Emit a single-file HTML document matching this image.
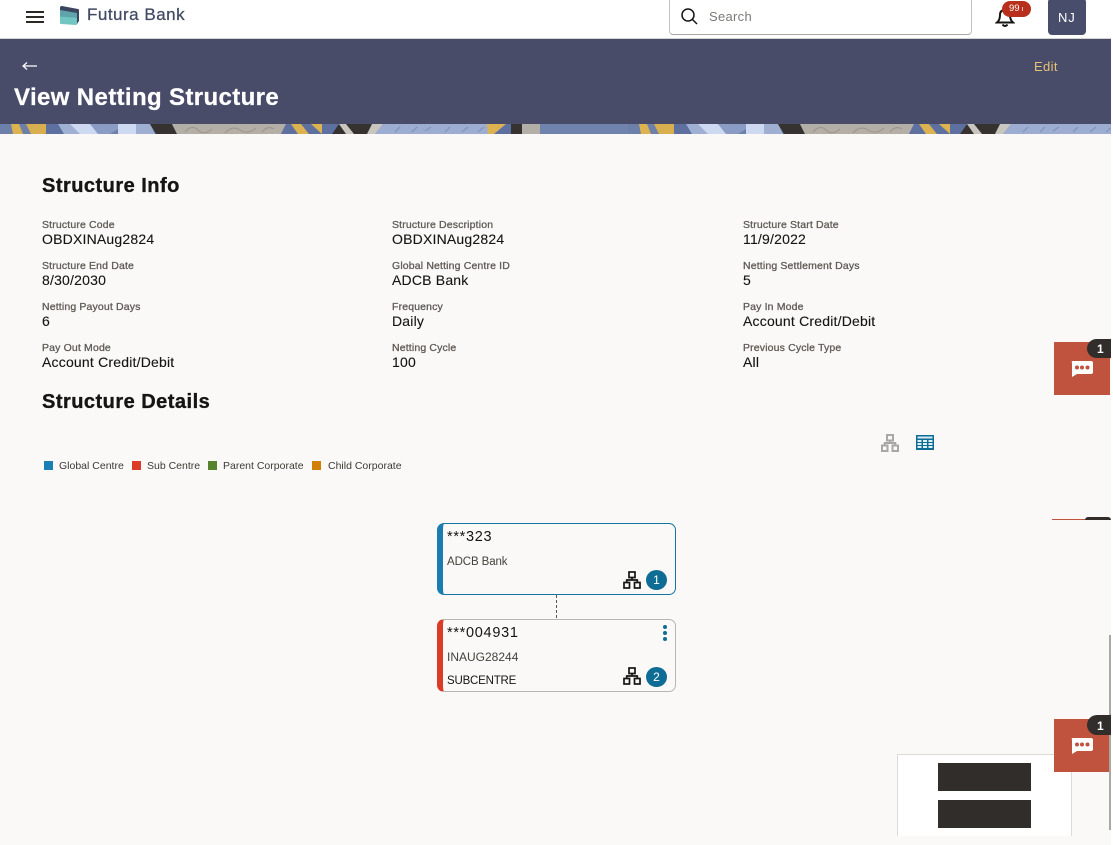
<!DOCTYPE html>
<html><head><meta charset="utf-8"><title>View Netting Structure</title>
<style>
html,body{margin:0;padding:0;}
body{width:1113px;height:845px;background:#faf9f7;position:relative;overflow:hidden;font-family:"Liberation Sans",sans-serif;color:#161513;}
div,span,svg{position:absolute;}
.t{white-space:nowrap;}
.l{font-size:10.5px;color:#5f5b56;font-weight:400;letter-spacing:.15px;-webkit-text-stroke:.3px #5f5b56;line-height:12px;}
.v{font-size:14px;color:#161513;letter-spacing:.2px;-webkit-text-stroke:.12px #161513;line-height:16px;}
.h{font-size:20px;font-weight:700;letter-spacing:.48px;-webkit-text-stroke:.35px #161513;line-height:24px;color:#161513;}
.lg{font-size:10.5px;color:#3d3a36;line-height:12px;letter-spacing:0;}
.sq{width:9px;height:9px;top:461px;}
</style></head><body>

<div style="left:0;top:0;width:1113px;height:39px;background:#fff;"></div>
<div style="left:0;top:38px;width:1113px;height:1px;background:#d5d3d0;"></div>
<div style="left:26px;top:11px;width:18px;height:2px;background:#2b2825;"></div>
<div style="left:26px;top:16px;width:18px;height:2px;background:#2b2825;"></div>
<div style="left:26px;top:21px;width:18px;height:2px;background:#2b2825;"></div>
<svg style="left:59px;top:5px;" width="21" height="21" viewBox="0 0 21 21">
<path d="M1 2.500 Q1 1 3 1 L19 4 Q20 4 20 5 V16 L18 19 L16 17 V8 L1 6Z" fill="#3c4560"/>
<path d="M1 5 L18 8 V13 L1 12Z" fill="#5fa3ab"/>
<path d="M1 11.500 L18 13 V19 Q18 20 17 20 L2 19 Q1 19 1 18Z" fill="#72c6c2"/></svg>
<div class="t" style="left:87px;top:5px;font-size:17px;line-height:20px;color:#414a63;letter-spacing:.5px;-webkit-text-stroke:.25px #414a63;">Futura Bank</div>

<div style="left:669px;top:-3px;width:301px;height:36px;background:#fff;border:1px solid #c4c2bf;border-bottom-color:#a9a7a4;border-radius:4px;"></div>
<svg style="left:680px;top:7px;" width="18" height="18" viewBox="0 0 18 18" fill="none" stroke="#161513" stroke-width="1.5"><circle cx="8" cy="8" r="6"/><path d="M12.500 12.500L17 17"/></svg>
<div class="t" style="left:709px;top:9px;font-size:13px;line-height:16px;color:#7d7a76;letter-spacing:.3px;">Search</div>

<svg style="left:995px;top:7px;" width="20" height="20" viewBox="0 0 20 20" fill="none" stroke="#161513" stroke-width="2"><path d="M2 15.500 Q5 13 5 8 Q5 3 10 3 Q15 3 15 8 Q15 13 18 15.500Z"/><path d="M7.500 17.500 Q10 20.500 12.500 17.500"/></svg>
<div style="left:1002px;top:1px;width:29px;height:16px;background:#b8301c;border-radius:8px;"></div>
<div class="t" style="left:1009px;top:3px;font-size:9.500px;line-height:11px;color:#fff;">99</div>
<div style="left:1021.500px;top:7px;width:1px;height:4px;background:#e8b8b0;"></div>
<div style="left:1048px;top:-2px;width:38px;height:37px;background:#484d6b;border-radius:4px;"></div>
<div class="t" style="left:1058px;top:10px;font-size:13px;line-height:16px;color:#fff;letter-spacing:.8px;">NJ</div>

<div style="left:0;top:39px;width:1113px;height:85px;background:#484c68;"></div>
<svg style="left:22px;top:61px;" width="15" height="10" viewBox="0 0 15 10" fill="none" stroke="#fff" stroke-width="1.200"><path d="M15 5H1M5 1.500L1 5L5 8.500"/></svg>
<div class="t" style="left:14px;top:84px;font-size:24px;line-height:27px;font-weight:700;color:#fff;letter-spacing:.37px;-webkit-text-stroke:.25px #fff;">View Netting Structure</div>
<div class="t" style="left:1034px;top:59px;font-size:13px;line-height:16px;color:#e5c07b;letter-spacing:.35px;">Edit</div>

<svg style="left:0;top:124px;" width="1113" height="10" viewBox="0 0 1113 10">
<defs><g id="band">
<rect width="628" height="10" fill="#6c80aa"/>
<polygon points="11,0 19,0 23,10 13,10" fill="#dcb350"/>
<polygon points="26,0 46,0 46,10 31,10" fill="#d8ae4f"/>
<polygon points="46,0 60,0 64,10 46,10" fill="#5d70a0"/>
<polygon points="58,0 118,0 118,4 110,10 64,10" fill="#9fb0d3"/>
<polygon points="70,0 90,0 98,10 80,10" fill="#cdd9f0"/>
<polygon points="90,0 118,0 118,5 110,10 98,10" fill="#8a9cc4"/>
<polygon points="118,0 136,0 136,10 118,10" fill="#cdd9f0"/>
<polygon points="136,0 150,0 155,10 136,10" fill="#9eafd2"/>
<polygon points="150,0 172,0 177,10 156,10" fill="#35322f"/>
<polygon points="172,0 286,0 281,10 177,10" fill="#b3aea6"/>
<path d="M185 8Q192 0 198 6T212 5M225 9Q232 1 240 6T256 4M262 8Q268 1 274 5" fill="none" stroke="#9a958d" stroke-width="1"/>
<polygon points="286,0 292,0 298,10 281,10" fill="#5d70a0"/>
<polygon points="291,0 301,0 309,10 298,10" fill="#dcb350"/>
<polygon points="301,0 311,0 322,10 309,10" fill="#5d70a0"/>
<polygon points="311,0 322,0 322,10" fill="#dcb350"/>
<polygon points="322,0 339,0 332,10 322,10" fill="#5d70a0"/>
<polygon points="339,0 378,0 370,10 332,10" fill="#35322f"/>
<polygon points="339,0 346,0 354,10 346,10" fill="#c9c6c0"/>
<polygon points="372,0 383,0 375,10 367,10" fill="#c9c6c0"/>
<polygon points="383,0 510,0 505,10 375,10" fill="#9dadd1"/>
<path d="M395 8L400 3M412 8L417 3M425 7L431 3M445 8L450 3M462 8L468 3M478 8L484 3" stroke="#7d8fb8" stroke-width="1"/>
<polygon points="487,0 506,0 494,10 488,10" fill="#dcb350"/>
<polygon points="506,0 511,0 511,10 494,10" fill="#5d70a0"/>
<rect x="511" y="0" width="11" height="10" fill="#35322f"/>
<rect x="522" y="0" width="18" height="10" fill="#b3aea6"/>
<polygon points="540,0 628,0 628,10 540,10" fill="#6f83ad"/>
</g></defs>
<use href="#band" x="0"/><use href="#band" x="628"/>
</svg>

<div class="h t" style="left:42px;top:174px;">Structure Info</div>
<div class="h t" style="left:42px;top:390px;">Structure Details</div>

<div class="l t" style="left:42px;top:219px;">Structure Code</div><div class="v t" style="left:42px;top:231px;">OBDXINAug2824</div>
<div class="l t" style="left:392px;top:219px;">Structure Description</div><div class="v t" style="left:392px;top:231px;">OBDXINAug2824</div>
<div class="l t" style="left:743px;top:219px;">Structure Start Date</div><div class="v t" style="left:743px;top:231px;">11/9/2022</div>
<div class="l t" style="left:42px;top:260px;">Structure End Date</div><div class="v t" style="left:42px;top:272px;">8/30/2030</div>
<div class="l t" style="left:392px;top:260px;">Global Netting Centre ID</div><div class="v t" style="left:392px;top:272px;">ADCB Bank</div>
<div class="l t" style="left:743px;top:260px;">Netting Settlement Days</div><div class="v t" style="left:743px;top:272px;">5</div>
<div class="l t" style="left:42px;top:301px;">Netting Payout Days</div><div class="v t" style="left:42px;top:313px;">6</div>
<div class="l t" style="left:392px;top:301px;">Frequency</div><div class="v t" style="left:392px;top:313px;">Daily</div>
<div class="l t" style="left:743px;top:301px;">Pay In Mode</div><div class="v t" style="left:743px;top:313px;">Account Credit/Debit</div>
<div class="l t" style="left:42px;top:342px;">Pay Out Mode</div><div class="v t" style="left:42px;top:354px;">Account Credit/Debit</div>
<div class="l t" style="left:392px;top:342px;">Netting Cycle</div><div class="v t" style="left:392px;top:354px;">100</div>
<div class="l t" style="left:743px;top:342px;">Previous Cycle Type</div><div class="v t" style="left:743px;top:354px;">All</div>

<svg style="left:881px;top:434px;" width="18" height="18" viewBox="0 0 18 18" fill="none" stroke="#a9a7a4" stroke-width="2"><rect x="6" y="1" width="6" height="5.500"/><rect x="1" y="11.500" width="5.500" height="5.500"/><rect x="11.500" y="11.500" width="5.500" height="5.500"/><path d="M9 6.500V9M3.700 11.500V9H14.300V11.500"/></svg>
<svg style="left:916px;top:435px;" width="18" height="15" viewBox="0 0 18 15"><rect width="18" height="15" fill="#0f6c94"/><rect x="1.500" y="1.500" width="15" height="2" fill="#d4ecf4"/><g fill="#e2f1f6"><rect x="1.500" y="5" width="4" height="2"/><rect x="7" y="5" width="4" height="2"/><rect x="12.500" y="5" width="4" height="2"/><rect x="1.500" y="8" width="4" height="2"/><rect x="7" y="8" width="4" height="2"/><rect x="12.500" y="8" width="4" height="2"/><rect x="1.500" y="11" width="4" height="2"/><rect x="7" y="11" width="4" height="2"/><rect x="12.500" y="11" width="4" height="2"/></g></svg>

<div class="sq" style="left:44px;background:#1a7fb5;"></div><div class="lg t" style="left:59px;top:459.500px;">Global Centre</div>
<div class="sq" style="left:132px;background:#dc3c27;"></div><div class="lg t" style="left:147px;top:459.500px;">Sub Centre</div>
<div class="sq" style="left:208px;background:#56822b;"></div><div class="lg t" style="left:223px;top:459.500px;">Parent Corporate</div>
<div class="sq" style="left:312px;background:#d07f00;"></div><div class="lg t" style="left:328px;top:459.500px;">Child Corporate</div>

<div style="left:437px;top:523px;width:232px;height:70px;border:1px solid #1574a3;border-left:6px solid #1a7db1;border-radius:7px;"></div>
<div class="t" style="left:447px;top:529px;font-size:14.500px;line-height:16px;letter-spacing:.7px;">***323</div>
<div class="t" style="left:447px;top:555px;font-size:11.500px;line-height:14px;color:#45423e;letter-spacing:-.1px;">ADCB Bank</div>
<svg style="left:623px;top:571px;" width="18" height="18" viewBox="0 0 18 18" fill="none" stroke="#161513" stroke-width="1.700"><rect x="6" y="1" width="6" height="5.500"/><rect x="1" y="11.500" width="5.500" height="5.500"/><rect x="11.500" y="11.500" width="5.500" height="5.500"/><path d="M9 6.500V9M3.700 11.500V9H14.300V11.500"/></svg>
<div style="left:646px;top:570px;width:21px;height:20px;background:#0f6c94;border-radius:50%;"></div>
<div class="t" style="left:646px;top:573px;width:21px;text-align:center;font-size:12px;line-height:14px;color:#fff;">1</div>

<div style="left:556px;top:595px;width:0;height:23px;border-left:1px dashed #5a5754;"></div>

<div style="left:437px;top:619px;width:232px;height:71px;border:1px solid #b8b6b3;border-left:6px solid #dc3c27;border-radius:7px;"></div>
<div class="t" style="left:447px;top:625px;font-size:14.500px;line-height:16px;letter-spacing:.7px;">***004931</div>
<div class="t" style="left:447px;top:650px;font-size:12px;line-height:14px;color:#45423e;">INAUG28244</div>
<div class="t" style="left:447px;top:674px;font-size:11.500px;line-height:14px;color:#161513;letter-spacing:-.2px;">SUBCENTRE</div>
<div style="left:663px;top:625px;width:4px;height:4px;border-radius:50%;background:#0f6c94;"></div>
<div style="left:663px;top:631px;width:4px;height:4px;border-radius:50%;background:#0f6c94;"></div>
<div style="left:663px;top:637px;width:4px;height:4px;border-radius:50%;background:#0f6c94;"></div>
<svg style="left:623px;top:667px;" width="18" height="18" viewBox="0 0 18 18" fill="none" stroke="#161513" stroke-width="1.700"><rect x="6" y="1" width="6" height="5.500"/><rect x="1" y="11.500" width="5.500" height="5.500"/><rect x="11.500" y="11.500" width="5.500" height="5.500"/><path d="M9 6.500V9M3.700 11.500V9H14.300V11.500"/></svg>
<div style="left:646px;top:667px;width:21px;height:20px;background:#0f6c94;border-radius:50%;"></div>
<div class="t" style="left:646px;top:670px;width:21px;text-align:center;font-size:12px;line-height:14px;color:#fff;">2</div>

<div style="left:897px;top:754px;width:173px;height:81px;background:#fff;border:1px solid #dedbd6;border-bottom:0;"></div>
<div style="left:938px;top:762.500px;width:93px;height:28px;background:#312d2a;"></div>
<div style="left:938px;top:800px;width:93px;height:28px;background:#312d2a;"></div>
<div style="left:1109px;top:635px;width:2px;height:195px;background:#aaa8a5;"></div>

<div style="left:1054px;top:342px;width:56px;height:53px;background:#c0533e;"></div>
<div style="left:1087px;top:339px;width:28px;height:19px;background:#312d2a;border-radius:10px 0 0 10px;"></div>
<div class="t" style="left:1097px;top:342px;font-size:12px;line-height:14px;font-weight:700;color:#fff;">1</div>
<svg style="left:1071px;top:361px;" width="22" height="17" viewBox="0 0 22 17"><path d="M2 0H20Q22 0 22 2V11Q22 13 20 13H6L1 16V2Q0 0 2 0Z" fill="#fff"/><circle cx="6" cy="6.500" r="2" fill="#c0533e"/><circle cx="11" cy="6.500" r="2" fill="#c0533e"/><circle cx="16.500" cy="6.500" r="2" fill="#c0533e"/></svg>

<div style="left:1052px;top:519px;width:36px;height:1px;background:#c0533e;"></div>
<div style="left:1085px;top:517px;width:26px;height:3px;background:#312d2a;border-radius:8px 8px 0 0;"></div>

<div style="left:1054px;top:719px;width:55px;height:53px;background:#c0533e;"></div>
<div style="left:1087px;top:715px;width:27px;height:20px;background:#312d2a;border-radius:10px 0 0 10px;"></div>
<div class="t" style="left:1097px;top:719px;font-size:12px;line-height:14px;font-weight:700;color:#fff;">1</div>
<svg style="left:1071px;top:738px;" width="22" height="17" viewBox="0 0 22 17"><path d="M2 0H20Q22 0 22 2V11Q22 13 20 13H6L1 16V2Q0 0 2 0Z" fill="#fff"/><circle cx="6" cy="6.500" r="2" fill="#c0533e"/><circle cx="11" cy="6.500" r="2" fill="#c0533e"/><circle cx="16.500" cy="6.500" r="2" fill="#c0533e"/></svg>

<div style="left:1111px;top:0;width:2px;height:845px;background:#fff;"></div>
</body></html>
